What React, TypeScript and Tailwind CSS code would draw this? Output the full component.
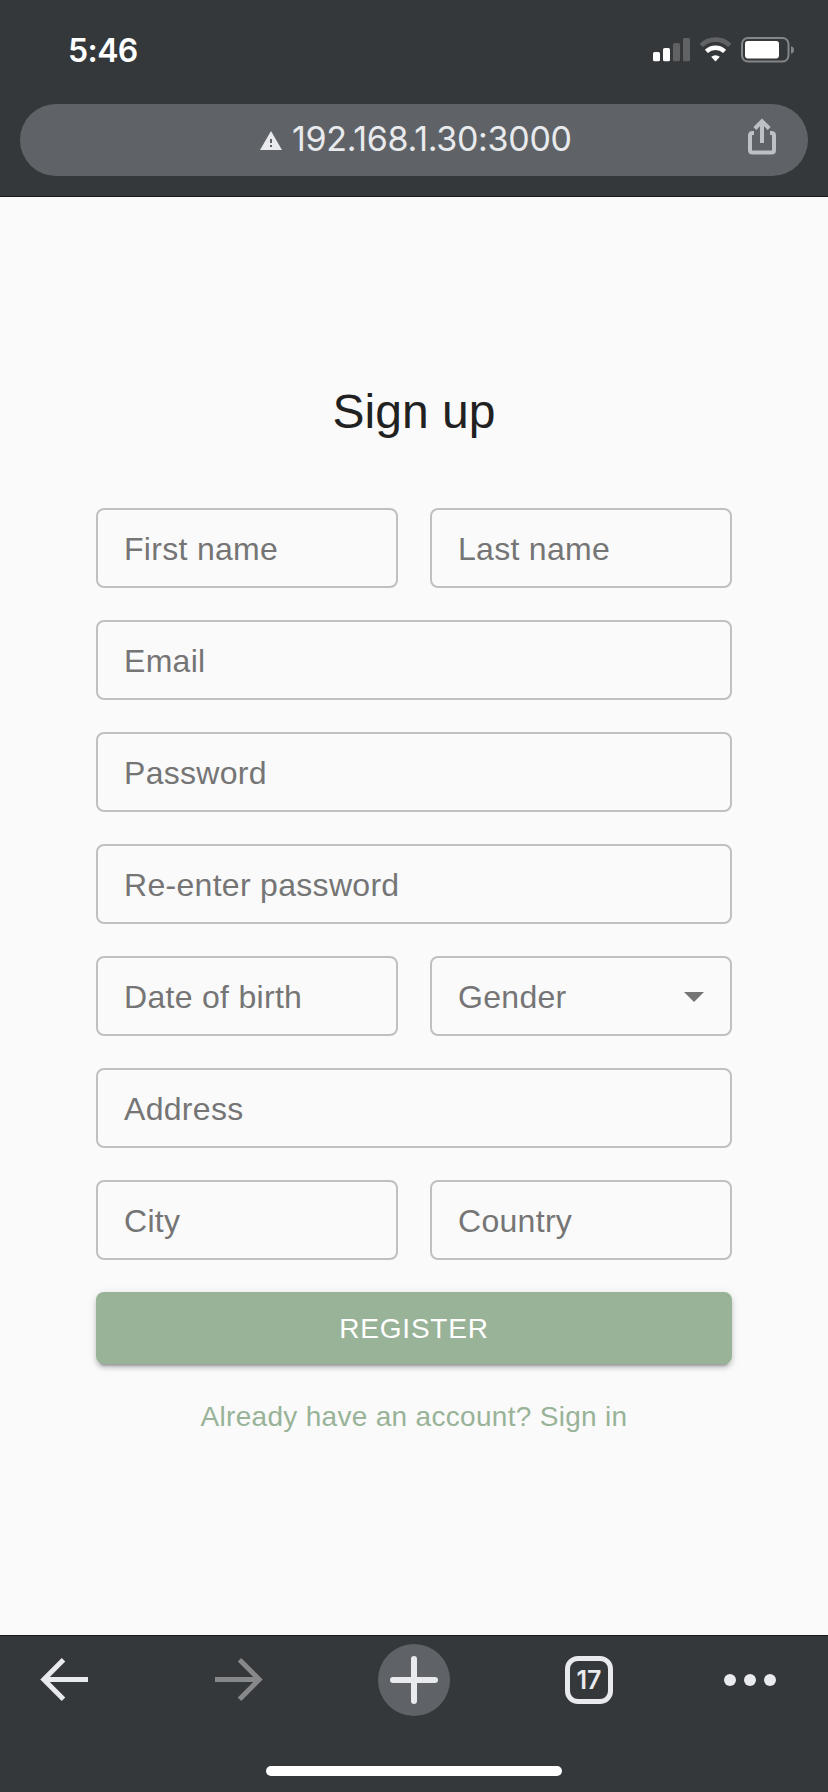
import React from "react";

function StatusIcons() {
  return (
    <svg width="142" height="26" viewBox="0 0 142 26" fill="none" aria-hidden="true">
      <rect x="0" y="15" width="7" height="9.3" rx="1.6" fill="#fff" />
      <rect x="10" y="11" width="7" height="13.3" rx="1.6" fill="#fff" />
      <rect x="20" y="6" width="7" height="18.3" rx="1.6" fill="#606264" />
      <rect x="30" y="1" width="7" height="23.3" rx="1.6" fill="#606264" />
      <path d="M48.2 8.4 A20.5 20.5 0 0 1 76.8 8.4" stroke="#606264" strokeWidth="4.6" />
      <path d="M53.4 14.4 A13 13 0 0 1 71.6 14.4" stroke="#fff" strokeWidth="4.4" />
      <path d="M62.5 24.4 L58.2 19.8 A6.4 6.4 0 0 1 66.8 19.8 Z" fill="#fff" />
      <rect x="89" y="1" width="46.5" height="23.6" rx="6" stroke="#848688" strokeWidth="2" />
      <rect x="92" y="4" width="34" height="17.4" rx="2.8" fill="#fff" />
      <path d="M138 9.2 Q141 10 141 13 Q141 16 138 16.8 Z" fill="#848688" />
    </svg>
  );
}

function Field({ label, select = false }: { label: string; select?: boolean }) {
  return (
    <div className="flex h-20 min-w-0 flex-1 items-center justify-between rounded-lg border-2 border-[#c0c0c0] px-[26px] pt-0.5">
      <span className="text-[32px] leading-[38px] tracking-[0.3px] whitespace-nowrap text-[#757575]">
        {label}
      </span>
      {select && (
        <svg width="20" height="10" viewBox="0 0 20 10" aria-hidden="true">
          <path d="M0 0H20L10 10Z" fill="#757575" />
        </svg>
      )}
    </div>
  );
}

const rows = [
  ["First name", "Last name"],
  ["Email"],
  ["Password"],
  ["Re-enter password"],
  ["Date of birth", "Gender"],
  ["Address"],
  ["City", "Country"],
];

export default function App() {
  return (
    <div className="flex h-[1792px] w-[828px] flex-col overflow-hidden bg-[#fafafa] font-['Liberation_Sans',Arial,sans-serif]">
      <header className="flex h-[197px] shrink-0 flex-col border-b border-[#17181a] bg-[#35383b] px-5 font-[Inter,sans-serif]">
        <div className="flex h-[104px] items-start justify-between pr-[13px] pl-12">
          <span className="pt-[31px] text-[32px] leading-10 font-semibold tracking-[-0.6px] text-white">5:46</span>
          <span className="pt-[37px]">
            <StatusIcons />
          </span>
        </div>
        <div className="flex h-[72px] items-center rounded-full bg-[#5f6367] pr-8 pl-60">
          <svg width="22" height="19" viewBox="0 0 22 19" className="mt-px" aria-hidden="true">
            <path d="M11 0L22 19H0Z" fill="#e8eaed" />
            <path d="M10 8h2v4h-2zM10 14h2v2h-2z" fill="#5f6367" />
          </svg>
          <span className="-mt-[3px] ml-2.5 flex-1 text-[34px] leading-10 tracking-[-0.3px] text-[#e8eaed]">
            192.168.1.30:3000
          </span>
          <svg width="28" height="37" viewBox="0 0 28 37" fill="none" stroke="#bdc1c6" strokeWidth="4" className="-mt-2" aria-hidden="true">
            <path d="M6 15H4.5Q2 15 2 17.5V32Q2 34.5 4.5 34.5H23.5Q26 34.5 26 32V17.5Q26 15 23.5 15H22" />
            <path d="M14 25V4M6.8 10.5L14 3.3L21.2 10.5" />
          </svg>
        </div>
      </header>

      <main className="flex flex-1 flex-col px-24 pt-[183px]">
        <h1 className="text-center text-[48px] leading-[64px] text-[#212121]">Sign up</h1>
        <form className="mt-16 flex flex-col gap-8">
          {rows.map((row) => (
            <div key={row[0]} className="flex gap-8">
              {row.map((label) => (
                <Field key={label} label={label} select={label === "Gender"} />
              ))}
            </div>
          ))}
          <button
            type="button"
            className="h-[72px] rounded-lg bg-[#98b398] text-[28px] leading-[49px] tracking-[0.8px] text-white shadow-[0_6px_2px_-4px_rgba(0,0,0,0.2),0_4px_4px_0_rgba(0,0,0,0.14),0_2px_10px_0_rgba(0,0,0,0.12)]"
          >
            REGISTER
          </button>
        </form>
        <a className="mt-[33px] text-center text-[28px] leading-10 tracking-[0.3px] text-[#98b398]">
          Already have an account? Sign in
        </a>
      </main>

      <footer className="flex h-[157px] shrink-0 flex-col items-center border-t border-[#17181a] bg-[#35383b] font-[Inter,sans-serif]">
        <nav className="mt-2 flex h-[72px] w-full items-center pl-10">
          <svg width="48" height="44" viewBox="0 0 48 44" fill="none" stroke="#e8eaed" strokeWidth="5" aria-hidden="true">
            <path d="M48 21.5H5M23.5 1.8L3.8 21.5L23.5 41.2" />
          </svg>
          <svg width="48" height="44" viewBox="0 0 48 44" fill="none" stroke="#86888a" strokeWidth="5" className="ml-[127px]" aria-hidden="true">
            <path d="M0 21.5H43M24.5 1.8L44.2 21.5L24.5 41.2" />
          </svg>
          <svg width="72" height="72" viewBox="0 0 72 72" className="ml-[115px]" aria-hidden="true">
            <circle cx="36" cy="36" r="36" fill="#5f6367" />
            <path d="M36 15V57M15 36H57" stroke="#e8eaed" strokeWidth="6" strokeLinecap="round" />
          </svg>
          <div className="ml-[115px] flex h-12 w-12 items-center justify-center rounded-[13px] border-[5px] border-[#e8eaed] text-[25px] leading-6 font-semibold text-[#e8eaed]">
            17
          </div>
          <svg width="52" height="12" viewBox="0 0 52 12" fill="#e8eaed" className="ml-[111px]" aria-hidden="true">
            <circle cx="6" cy="6" r="6" />
            <circle cx="26" cy="6" r="6" />
            <circle cx="46" cy="6" r="6" />
          </svg>
        </nav>
        <div className="mt-[50px] h-2.5 w-[296px] rounded-full bg-white" />
      </footer>
    </div>
  );
}
